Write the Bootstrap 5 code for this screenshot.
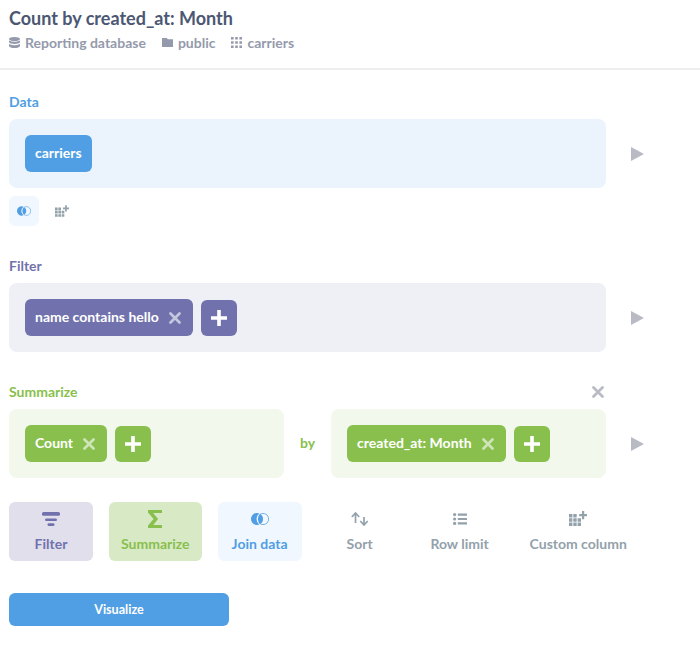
<!DOCTYPE html>
<html lang="en">
<head>
<meta charset="utf-8">
<meta name="viewport" content="width=device-width, initial-scale=1">
<title>Count by created_at: Month</title>
<link href="https://cdn.jsdelivr.net/npm/bootstrap@5.3.0/dist/css/bootstrap.min.css" rel="stylesheet">
<style>
:root{--blue:#509ee3;--violet:#7172ad;--green:#88bf4d;--slate:#93a1ab}
body{font-family:Lato,sans-serif;font-size:14px;font-weight:700;line-height:17px;color:#4c5773;overflow:hidden}
svg{display:block;flex:none;fill:currentColor}
.page-head{height:70px;padding:7px 9px 0;border-bottom:2px solid #eeeeef}
.page-title{font-size:18px;line-height:22px;font-weight:700}
.crumbs{color:#949aab;margin-top:5px;gap:16px}
.crumbs span{gap:5px}
.steps{padding:23px 9px 0}
.step-title{height:17px;width:597px;margin-bottom:9px}
.step-next{height:48px;padding-top:31px}
.tone-blue{color:var(--blue)}
.tone-violet{color:var(--violet)}
.tone-green{color:var(--green)}
.tone-slate{color:var(--slate)}
.well{height:69px;padding:16px;border-radius:8px;gap:8px}
.well-wide{width:597px}
.well-half{width:275px}
.well-blue{background:#ebf4fc}
.well-violet{background:#eff0f6}
.well-green{background:#f3f8ed}
.chip{height:37px;border-radius:6px;padding:0 10px;color:#fff}
.chip span{margin-bottom:2px}
.chip svg{opacity:.6;margin:0 2px 0 10px}
.chip-add{width:36px;height:36px;border-radius:6px;color:#fff}
.fill-blue{background:var(--blue)}
.fill-violet{background:var(--violet)}
.fill-green{background:var(--green)}
.run{color:#b8bbc3;margin-left:25px}
.remove{color:#b8bbc3;margin-right:2px}
.step-tools{margin-top:8px;gap:8px}
.step-tools>span{width:30px;height:30px;border-radius:6px}
.joiner{width:47px;margin-bottom:2px}
.action{height:59px;min-width:84px;padding:8px 12px 0;border-radius:6px}
.action-icon{height:17px}
.action-text{margin-top:8px}
.bg-join{background:#f1f7fe}
.bg-filter{background:#e0dfeb}
.bg-sum{background:#d8e9c6}
.visualize{width:220px;height:33px;margin-top:32px;padding:0;border-radius:6px;color:#fff;font-size:12.600px;font-weight:700;line-height:16px}
.visualize,.visualize:hover{background:var(--blue);color:#fff}
</style>
</head>
<body>
<svg width="0" height="0" class="d-none" aria-hidden="true">
<symbol id="close" viewBox="0 0 12 12"><path d="M1.500 1.500l9 9M10.500 1.500l-9 9" stroke="currentColor" stroke-width="2.700" stroke-linecap="round" fill="none"/></symbol>
<symbol id="plus" viewBox="0 0 16 16"><path d="M6.200 0h3.600v6.200H16v3.600H9.800V16H6.200V9.800H0V6.200h6.200z"/></symbol>
<symbol id="play" viewBox="0 0 13 14"><path d="M0 0l13 7-13 7z"/></symbol>
<symbol id="join" viewBox="0 0 18 12"><path d="M8.300.46A6 6 0 1 0 8.300 11.540A6.900 6.900 0 0 1 8.300.46z"/><path d="M9 .8A6 6 0 0 1 9 11.200A7.500 7.500 0 0 1 9 .8z"/><path d="M9.300 1.100A5.600 5.600 0 1 1 9.300 10.900" fill="none" stroke="currentColor" stroke-width=".8"/></symbol>
<symbol id="column" viewBox="0 0 18 15"><path d="M0 3h3.400v3.400H0zM4.300 3h3.400v3.400H4.300zM0 7.300h3.400v3.400H0zM4.300 7.300h3.400v3.400H4.300zM8.600 7.300H12v3.400H8.600zM0 11.600h3.400V15H0zM4.300 11.600h3.400V15H4.300zM8.600 11.600H12V15H8.600zM13 0h2.200v3H18v2.200h-2.800v3H13v-3h-2.800V3H13z"/></symbol>
</svg>

<header class="page-head">
  <h1 class="page-title m-0">Count by created_at: Month</h1>
  <div class="crumbs d-flex">
    <span class="d-flex align-items-center"><svg width="11" height="11" viewBox="0 0 11 11"><ellipse cx="5.500" cy="2" rx="5.500" ry="2"/><path d="M0 3.400q5.500 2.600 11 0v1.800q-1 1.700-5.500 1.700T0 5.200zM0 7q5.500 2.600 11 0v2q-1 2-5.500 2T0 9z"/></svg>Reporting database</span>
    <span class="d-flex align-items-center"><svg width="11" height="9" viewBox="0 0 11 9"><path d="M0 0h4.800l1 1.200H11V9H0z"/></svg>public</span>
    <span class="d-flex align-items-center"><svg width="11" height="11" viewBox="0 0 11 11"><path d="M0 0h2.600v2.600H0zM4.200 0h2.600v2.600H4.200zM8.400 0H11v2.600H8.400zM0 4.200h2.600v2.600H0zM4.200 4.200h2.600v2.600H4.200zM8.400 4.200H11v2.600H8.400zM0 8.400h2.600V11H0zM4.200 8.400h2.600V11H4.200zM8.400 8.400H11V11H8.400z"/></svg>carriers</span>
  </div>
</header>

<main class="steps">
  <section>
    <div class="step-title tone-blue">Data</div>
    <div class="d-flex align-items-center">
      <div class="well well-wide well-blue d-flex"><div class="chip fill-blue d-flex align-items-center"><span>carriers</span></div></div>
      <svg class="run" width="13" height="14"><use href="#play"/></svg>
    </div>
    <div class="step-tools d-flex">
      <span class="bg-join tone-blue d-flex align-items-center justify-content-center"><svg width="14" height="10"><use href="#join"/></svg></span>
      <span class="tone-slate d-flex align-items-center justify-content-center"><svg width="14" height="12"><use href="#column"/></svg></span>
    </div>
  </section>

  <section>
    <div class="step-title step-next tone-violet">Filter</div>
    <div class="d-flex align-items-center">
      <div class="well well-wide well-violet d-flex">
        <div class="chip fill-violet d-flex align-items-center"><span>name contains hello</span><svg width="12" height="12"><use href="#close"/></svg></div>
        <div class="chip-add fill-violet d-flex align-items-center justify-content-center align-self-end"><svg width="16" height="16"><use href="#plus"/></svg></div>
      </div>
      <svg class="run" width="13" height="14"><use href="#play"/></svg>
    </div>
  </section>

  <section>
    <div class="step-title step-next tone-green d-flex align-items-center justify-content-between">Summarize<svg class="remove" width="12" height="12"><use href="#close"/></svg></div>
    <div class="d-flex align-items-center">
      <div class="well well-half well-green d-flex">
        <div class="chip fill-green d-flex align-items-center"><span>Count</span><svg width="12" height="12"><use href="#close"/></svg></div>
        <div class="chip-add fill-green d-flex align-items-center justify-content-center align-self-end"><svg width="16" height="16"><use href="#plus"/></svg></div>
      </div>
      <div class="joiner tone-green text-center">by</div>
      <div class="well well-half well-green d-flex">
        <div class="chip fill-green d-flex align-items-center"><span>created_at: Month</span><svg width="12" height="12"><use href="#close"/></svg></div>
        <div class="chip-add fill-green d-flex align-items-center justify-content-center align-self-end"><svg width="16" height="16"><use href="#plus"/></svg></div>
      </div>
      <svg class="run" width="13" height="14"><use href="#play"/></svg>
    </div>
  </section>

  <div class="d-flex gap-3 mt-4 text-center text-nowrap">
    <div class="action bg-filter tone-violet">
      <div class="action-icon d-flex align-items-center justify-content-center"><svg width="18" height="14" viewBox="0 0 18 14"><rect width="18" height="3.800" rx="1.500"/><rect x="3" y="6.400" width="12" height="2.700" rx="1.350"/><rect x="5.500" y="11.300" width="7" height="2.700" rx="1.350"/></svg></div>
      <div class="action-text">Filter</div>
    </div>
    <div class="action bg-sum tone-green">
      <div class="action-icon d-flex align-items-center justify-content-center"><svg width="14" height="18" viewBox="0 0 14 18"><path d="M0 0h14v3H5.200l4.900 6-4.900 6H14v3H0v-2.600L5.600 9 0 2.600z"/></svg></div>
      <div class="action-text">Summarize</div>
    </div>
    <div class="action bg-join tone-blue">
      <div class="action-icon d-flex align-items-center justify-content-center"><svg width="18" height="12"><use href="#join"/></svg></div>
      <div class="action-text">Join data</div>
    </div>
    <div class="action tone-slate">
      <div class="action-icon d-flex align-items-center justify-content-center"><svg width="18" height="14" viewBox="0 0 18 14"><path d="M4.500 11V1.200M.8 5l3.700-4 3.700 4M13 5v7.800M9.300 9l3.700 4 3.700-4" fill="none" stroke="currentColor" stroke-width="1.700"/></svg></div>
      <div class="action-text">Sort</div>
    </div>
    <div class="action tone-slate">
      <div class="action-icon d-flex align-items-center justify-content-center"><svg width="14" height="12" viewBox="0 0 14 12"><path d="M4.800.5H14v2.200H4.800zM4.800 4.900H14v2.200H4.800zM4.800 9.300H14v2.200H4.800z"/><circle cx="1.600" cy="1.600" r="1.600"/><circle cx="1.600" cy="6" r="1.600"/><circle cx="1.600" cy="10.400" r="1.600"/></svg></div>
      <div class="action-text">Row limit</div>
    </div>
    <div class="action tone-slate">
      <div class="action-icon d-flex align-items-center justify-content-center"><svg width="18" height="15"><use href="#column"/></svg></div>
      <div class="action-text">Custom column</div>
    </div>
  </div>

  <button type="button" class="visualize btn d-block border-0">Visualize</button>
</main>
<script src="https://cdn.jsdelivr.net/npm/bootstrap@5.3.0/dist/js/bootstrap.bundle.min.js"></script>
</body>
</html>
